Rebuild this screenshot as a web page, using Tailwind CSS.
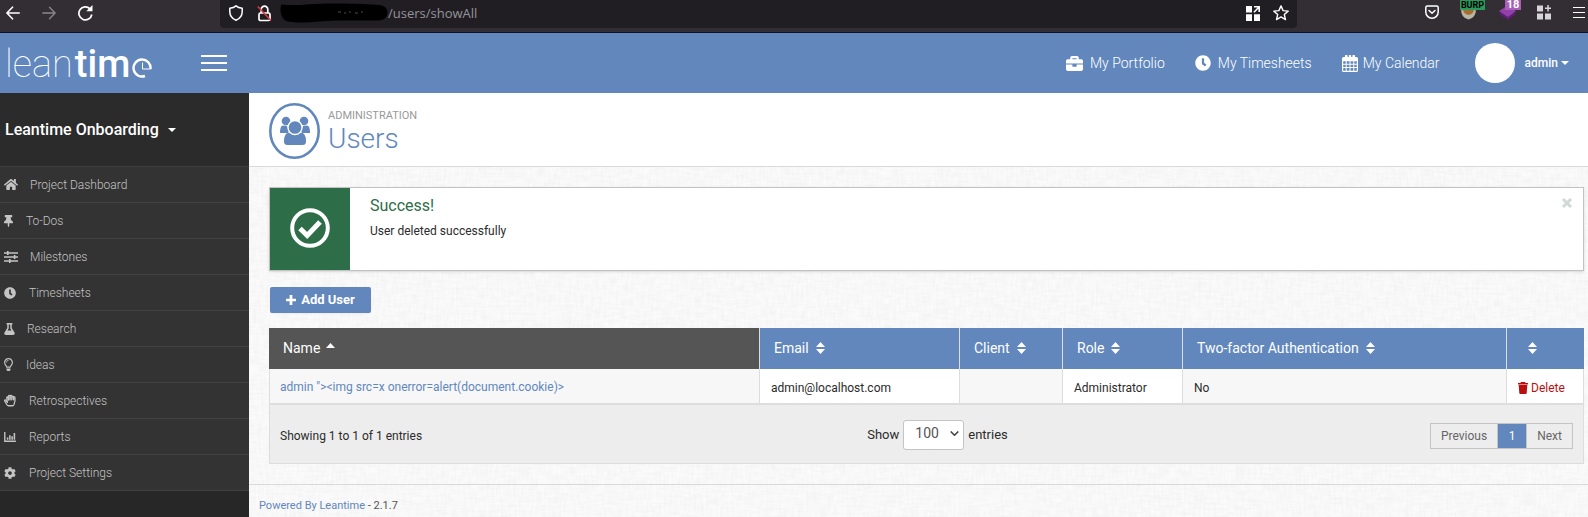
<!DOCTYPE html>
<html lang="en">
<head>
<meta charset="utf-8">
<meta name="viewport" content="width=device-width, initial-scale=1">
<title>Users - Leantime</title>
<script src="https://cdn.jsdelivr.net/npm/@tailwindcss/browser@4"></script>
</head>
<body class="min-h-screen flex flex-col font-[Roboto,sans-serif] text-xs leading-5 text-[#2b2b2b] bg-[#f7f7f7]">

<!-- Icon sprite -->
<svg class="hidden" aria-hidden="true">
  <symbol id="briefcase" viewBox="0 0 512 512"><path d="M320 336c0 8.840-7.160 16-16 16h-96c-8.840 0-16-7.160-16-16v-48H0v144c0 25.600 22.400 48 48 48h416c25.600 0 48-22.400 48-48V288H320v48zm144-208h-80V80c0-25.600-22.400-48-48-48H176c-25.600 0-48 22.400-48 48v48H48c-25.600 0-48 22.400-48 48v80h512v-80c0-25.600-22.400-48-48-48zm-144 0H192V96h128v32z"/></symbol>
  <symbol id="clock" viewBox="0 0 512 512"><path d="M256 8C119 8 8 119 8 256s111 248 248 248 248-111 248-248S393 8 256 8zm57.100 350.100L224.900 294c-3.100-2.300-4.900-5.900-4.900-9.700V116c0-6.600 5.400-12 12-12h48c6.600 0 12 5.400 12 12v137.700l63.500 46.200c5.400 3.900 6.500 11.400 2.600 16.800l-28.200 38.800c-3.900 5.300-11.400 6.500-16.800 2.600z"/></symbol>
  <symbol id="calendar" viewBox="0 0 16 17"><path fill-rule="evenodd" d="M3 1a1.300 1.300 0 0 1 2.600 0v1h1.200V1a1.200 1.200 0 0 1 2.400 0v1h1.200V1A1.300 1.300 0 0 1 13 1v1h1.500Q16 2 16 3.500v12q0 1.500-1.500 1.500h-13Q0 17 0 15.500v-12Q0 2 1.500 2H3zM1.200 6.200v2.500h2.500V6.200zm3.500 0v2.500h2.800V6.200zm3.800 0v2.500h2.800V6.200zm3.800 0v2.500h2.500V6.200zM1.200 9.700v2.400h2.500V9.700zm3.500 0v2.400h2.800V9.700zm3.800 0v2.400h2.800V9.700zm3.800 0v2.400h2.500V9.700zM1.200 13.100v2.600h2.500v-2.600zm3.500 0v2.600h2.800v-2.600zm3.800 0v2.600h2.800v-2.600zm3.800 0v2.600h2.500v-2.600z"/></symbol>
  <symbol id="home" viewBox="0 0 576 512"><path d="M280.370 148.260L96 300.110V464a16 16 0 0 0 16 16l112.060-.29a16 16 0 0 0 15.920-16V368a16 16 0 0 1 16-16h64a16 16 0 0 1 16 16v95.640a16 16 0 0 0 16 16.050L464 480a16 16 0 0 0 16-16V300L295.670 148.260a12.190 12.190 0 0 0-15.300 0zM571.600 251.470L488 182.560V44.050a12 12 0 0 0-12-12h-56a12 12 0 0 0-12 12v72.610L318.470 43a48 48 0 0 0-61 0L4.340 251.470a12 12 0 0 0-1.600 16.900l25.500 31A12 12 0 0 0 45.150 301l235.220-193.740a12.190 12.190 0 0 1 15.300 0L530.900 301a12 12 0 0 0 16.900-1.600l25.500-31a12 12 0 0 0-1.700-16.930z"/></symbol>
  <symbol id="pin" viewBox="0 0 384 512"><path d="M298.028 214.267L285.793 96H328c13.255 0 24-10.745 24-24V24c0-13.255-10.745-24-24-24H56C42.745 0 32 10.745 32 24v48c0 13.255 10.745 24 24 24h42.207L85.972 214.267C37.465 236.820 0 277.261 0 328c0 13.255 10.745 24 24 24h136v104.007c0 1.242.289 2.467.845 3.578l24 48c2.941 5.882 11.364 5.893 14.311 0l24-48a8.008 8.008 0 0 0 .845-3.578V352h136c13.255 0 24-10.745 24-24-.001-51.183-37.983-91.420-85.973-113.733z"/></symbol>
  <symbol id="sliders" viewBox="0 0 14 12"><path d="M0 1.200h14v1.500H0zM0 5.200h14v1.500H0zM0 9.200h14v1.500H0zM3 0h1.600v4H3zM9.800 4h1.600v4H9.800zM5 8h1.600v4H5z"/></symbol>
  <symbol id="flask" viewBox="0 0 448 512"><path fill-rule="evenodd" d="M437.200 403.500L320 215V64h8c13.300 0 24-10.700 24-24V24c0-13.300-10.700-24-24-24H120c-13.300 0-24 10.700-24 24v16c0 13.300 10.700 24 24 24h8v151L10.800 403.500C-18.500 450.600 15.300 512 70.900 512h306.200c55.700 0 89.400-61.500 60.100-108.500zM137.900 320l48.200-77.600c3.700-5.200 5.800-11.600 5.800-18.400V64h64v160c0 6.900 2.200 13.200 5.800 18.400l48.200 77.600h-172z"/></symbol>
  <symbol id="bulb" viewBox="0 0 352 512"><path fill-rule="evenodd" d="M176 0C78 0 0 79 0 176c0 45 17 85 44 116 17 19 43 59 52 92h160c9-33 35-73 52-92 27-31 44-71 44-116C352 79 274 0 176 0zm96 262c-19 22-35 47-47 74h-98c-12-27-28-52-47-74-21-24-32-54-32-86C48 104 105 48 176 48s128 56 128 128c0 32-11 62-32 86zM176 80c-53 0-96 43-96 96h32c0-35 29-64 64-64zM96 416h160v42l-27 40q-8 14-24 14h-58q-16 0-24-14l-27-40z"/></symbol>
  <symbol id="hand" viewBox="0 0 16 16"><path d="M4.500 10.500 2.300 7.600C1.500 6.500.3 7.500.9 8.600l3 5.100Q4.700 15 6.200 15h5.200q1.400 0 1.900-1.500l1.300-5V4.200c0-1.400-1.900-1.400-1.900 0V7M4.500 10.500 3.600 4.300C3.500 3 5.200 2.700 5.400 4l.8 3.500L5.900 2.400c0-1.400 1.900-1.500 2 0l.3 4.600.3-4.900c.1-1.300 1.900-1.200 1.900.1l-.1 4.900.6-4c.2-1.200 2-.9 1.900.4" fill="none" stroke="currentColor" stroke-width="1.700" stroke-linejoin="round" stroke-linecap="round"/></symbol>
  <symbol id="chart" viewBox="0 0 13 11"><path d="M0 0h1.500v9.300H13V11H0zM3 6h1.700v2.500H3zM5.500 3.500h1.700v5H5.500zM8 4.700h1.700v3.800H8zM10.500 1h1.700v7.500h-1.700z"/></symbol>
  <symbol id="cog" viewBox="0 0 512 512"><path d="M487.400 315.700l-42.600-24.600c4.300-23.200 4.300-47 0-70.200l42.600-24.600c4.900-2.800 7.100-8.600 5.500-14-11.100-35.600-30-67.800-54.700-94.600-3.800-4.100-10-5.100-14.800-2.300L380.800 110c-17.900-15.400-38.500-27.300-60.800-35.100V25.800c0-5.600-3.900-10.500-9.400-11.700-36.700-8.200-74.300-7.800-109.200 0-5.500 1.200-9.400 6.100-9.400 11.700V75c-22.200 7.900-42.800 19.800-60.800 35.100L88.700 85.500c-4.900-2.800-11-1.900-14.800 2.300-24.700 26.700-43.600 58.900-54.700 94.600-1.700 5.400.6 11.200 5.500 14L67.300 221c-4.300 23.200-4.300 47 0 70.200l-42.600 24.600c-4.900 2.800-7.100 8.600-5.500 14 11.100 35.600 30 67.800 54.700 94.600 3.800 4.100 10 5.100 14.800 2.300l42.600-24.600c17.900 15.400 38.500 27.300 60.800 35.100v49.200c0 5.600 3.900 10.500 9.400 11.700 36.700 8.200 74.300 7.800 109.200 0 5.500-1.200 9.400-6.100 9.400-11.700v-49.200c22.200-7.900 42.800-19.800 60.800-35.100l42.600 24.600c4.900 2.800 11 1.900 14.800-2.300 24.700-26.700 43.600-58.900 54.700-94.600 1.500-5.500-.7-11.300-5.600-14.100zM256 336c-44.100 0-80-35.900-80-80s35.900-80 80-80 80 35.900 80 80-35.900 80-80 80z"/></symbol>
  <symbol id="sort" viewBox="0 0 9 12"><path d="M0 5 4.500 0 9 5zM0 7h9l-4.500 5z"/></symbol>
  <symbol id="caret" viewBox="0 0 8 4"><path d="M0 0h8L4 4z"/></symbol>
</svg>

<!-- Browser toolbar -->
<div class="flex items-start h-[33px] shrink-0 bg-[#332e34] border-b border-[#0a1128] text-white">
  <div class="flex items-center gap-[22px] w-[220px] h-[26px] pl-[6px] shrink-0">
    <button aria-label="Back"><svg class="w-[14px] h-[14px]" viewBox="0 0 14 14" fill="none" stroke="currentColor" stroke-width="1.600" stroke-linecap="round" stroke-linejoin="round"><path d="M13.200 7H1M6.500 1.200.9 7l5.600 5.800"/></svg></button>
    <button aria-label="Forward" class="text-[#8a868b]"><svg class="w-[14px] h-[14px]" viewBox="0 0 14 14" fill="none" stroke="currentColor" stroke-width="1.300" stroke-linecap="round" stroke-linejoin="round"><path d="M.8 7H13M7.500 1.200 13.100 7l-5.600 5.800"/></svg></button>
    <button aria-label="Reload"><svg class="w-[15px] h-[16px]" viewBox="0 0 15 16" fill="none" stroke="currentColor" stroke-width="1.700"><path d="M13.800 9.500A6.500 6.500 0 1 1 12 3.800l1 1"/><path d="M14.500 0v6.300H8.300z" fill="currentColor" stroke="none"/></svg></button>
  </div>
  <div class="flex flex-1 items-center h-[28px] pb-[2px] pl-[9px] pr-2 rounded-b bg-[#201e23]">
    <svg class="w-[14px] h-[16px]" viewBox="0 0 14 16" fill="none" stroke="currentColor" stroke-width="1.500" stroke-linejoin="round"><path d="M7 .9C8.600 2.300 10.800 3 13.200 3.300v3.200c0 4.300-2.700 7.300-6.200 8.700C3.500 13.800.8 10.800.8 6.500V3.300C3.200 3 5.400 2.300 7 .9z"/></svg>
    <svg class="w-[15px] h-[17px] ml-[14px]" viewBox="0 0 15 17" fill="none" stroke="currentColor" stroke-width="1.700"><rect x="2" y="8" width="11" height="7.500" rx="1.500"/><path d="M4.200 8V4.500a3.300 3.300 0 0 1 6.600 0V8"/><path d="M.8 1.500 14 15.500" stroke="#e03848" stroke-width="1.500"/></svg>
    <svg class="w-[108px] h-[20px] ml-2" viewBox="0 0 108 20"><path d="M1 2C0 1 14 3 26 1.500 50-.5 85 .5 99 2q9 1 8.500 8Q107 17 99 17.500C75 18 60 16.500 40 18.500c-14 1-27 2-35-1Q-1 12 1 2z" fill="#000"/><path d="M58 9h3m3 1h2m3-1h2m4 1h3m3-1h2" stroke="#4a4a4a" stroke-width="1"/></svg>
    <span class="font-['Open_Sans',sans-serif] text-[13px] text-[#96939a]">/users/showAll</span>
    <svg class="w-[14px] h-[15px] ml-auto" viewBox="0 0 14 15" fill="currentColor"><path d="M0 0h6v6.500H0zM0 8.300h6V15H0zM8 8.300h6V15H8z"/><path d="M8 .8h5.200V6M13 1 8 6.300" fill="none" stroke="currentColor" stroke-width="1.600"/></svg>
    <svg class="w-[16px] h-[16px] ml-[13px]" viewBox="0 0 16 16" fill="none" stroke="currentColor" stroke-width="1.400" stroke-linejoin="round"><path d="M8 .9l2.100 4.700 5.100.5-3.900 3.400 1.200 5.100L8 11.900l-4.500 2.700 1.200-5.100L.8 6.100l5.100-.5z"/></svg>
  </div>
  <div class="flex items-start w-[291px] h-[26px] pl-[128px] shrink-0">
    <svg class="w-[14px] h-[14px] mt-[5px]" viewBox="0 0 14 14" fill="none" stroke="currentColor" stroke-width="1.500" stroke-linecap="round" stroke-linejoin="round"><path d="M.8 2.500Q.8.900 2.400.9h9.200q1.600 0 1.600 1.600V7A6.200 6.200 0 0 1 .8 7zM4 5.500l3 2.800 3-2.800"/></svg>
    <div class="relative w-[24px] h-[20px] ml-[21px]">
      <svg class="w-[18px] h-[20px]" viewBox="0 0 18 20"><path d="M1 9h15q0 9-7.500 10.500Q1 18 1 9z" fill="#b9b5a4"/><path d="M3 9h11q0 5-5.500 6Q3 14 3 9z" fill="#a5702d"/></svg>
      <span class="absolute left-0 top-0 w-[25px] h-[10px] bg-[#2a9a5c] text-center font-bold text-black text-[9px] leading-[10px]">BURP</span>
    </div>
    <div class="relative w-[22px] h-[20px] ml-[15px]">
      <svg class="w-[18px] h-[20px]" viewBox="0 0 18 20"><path d="M0 14l8-5 9 5-8 6z" fill="#5c1f73"/><path d="M0 11l8-5 9 5-8 6z" fill="#9440aa"/></svg>
      <span class="absolute right-0 top-0 w-[16px] h-[10px] bg-[#a95fba] text-center font-bold text-[11px] leading-[10px]">18</span>
    </div>
    <svg class="w-[14px] h-[15px] mt-[5px] ml-[16px]" viewBox="0 0 14 15" fill="#d8d5d9"><path d="M0 .5h6v6H0zM0 8.500h6v6H0zM8 8.500h6v6H8zM10.300 0h1.500v2.500H14V4h-2.200v2.500h-1.500V4H8V2.500h2.300z"/></svg>
    <button aria-label="Menu" class="flex flex-col gap-1 w-[12px] mt-[7px] ml-[22px]"><i class="h-px w-full bg-white"></i><i class="h-px w-full bg-white"></i><i class="h-px w-full bg-white"></i></button>
  </div>
</div>

<!-- Application header -->
<header class="flex items-center h-[60px] shrink-0 bg-[#6187bd] text-white">
  <div class="flex items-center justify-between w-[249px] h-full pl-[5px] pr-[22px] shrink-0">
    <a href="#" aria-label="Leantime" class="flex items-center gap-[2px] pt-[2px] text-[38px] leading-10"><span class="font-[100]">lean</span><span class="font-medium">tim</span><svg class="w-[20px] h-[20px] mt-2" viewBox="0 0 20 20" fill="none" stroke="currentColor"><path d="M18.500 11A8.500 8.500 0 1 0 13 18" stroke-width="2.400"/><path d="M10.500 4.500v6.500h8" stroke-width="1"/></svg></a>
    <button aria-label="Toggle menu" class="flex flex-col gap-[5px] w-[26px]"><i class="h-[2px] w-full bg-white"></i><i class="h-[2px] w-full bg-white"></i><i class="h-[2px] w-full bg-white"></i></button>
  </div>
  <nav class="flex items-center ml-auto pr-[19px] text-sm font-light">
    <a href="#" class="flex items-center gap-[7px]"><svg class="w-[17px] h-[17px]" fill="currentColor"><use href="#briefcase"/></svg>My Portfolio</a>
    <a href="#" class="flex items-center gap-[7px] ml-[30px]"><svg class="w-[16px] h-[16px]" fill="currentColor"><use href="#clock"/></svg>My Timesheets</a>
    <a href="#" class="flex items-center gap-[5px] ml-[30px]"><svg class="w-[16px] h-[17px]" fill="currentColor"><use href="#calendar"/></svg>My Calendar</a>
    <button class="flex items-center ml-[35px] text-xs font-medium"><i class="size-10 rounded-full bg-white mr-[10px]"></i>admin<svg class="w-[8px] h-[4px] ml-[3px]" fill="currentColor"><use href="#caret"/></svg></button>
  </nav>
</header>

<div class="flex flex-1">
  <!-- Sidebar -->
  <aside class="w-[249px] shrink-0 bg-[#272727] text-[#c4c4c4]">
    <button class="flex items-center w-full h-[73px] pl-[5px] bg-[#2b2b2b] text-white text-base font-medium">Leantime Onboarding<svg class="w-[8px] h-[4px] ml-[9px]" fill="currentColor"><use href="#caret"/></svg></button>
    <nav class="border-t border-[#3f3f3f] bg-[#333] font-light">
      <a href="#" class="flex items-center gap-[12px] h-9 pl-1 border-b border-[#414141]"><svg class="w-[14px] h-[13px]" fill="currentColor"><use href="#home"/></svg>Project Dashboard</a>
      <a href="#" class="flex items-center gap-[13px] h-9 pl-1 border-b border-[#414141]"><svg class="w-[9px] h-[12px]" fill="currentColor"><use href="#pin"/></svg>To-Dos</a>
      <a href="#" class="flex items-center gap-[12px] h-9 pl-1 border-b border-[#414141]"><svg class="w-[14px] h-[12px]" fill="currentColor"><use href="#sliders"/></svg>Milestones</a>
      <a href="#" class="flex items-center gap-[13px] h-9 pl-1 border-b border-[#414141]"><svg class="w-[12px] h-[12px]" fill="currentColor"><use href="#clock"/></svg>Timesheets</a>
      <a href="#" class="flex items-center gap-[12px] h-9 pl-1 border-b border-[#414141]"><svg class="w-[11px] h-[12px]" fill="currentColor"><use href="#flask"/></svg>Research</a>
      <a href="#" class="flex items-center gap-[13px] h-9 pl-1 border-b border-[#414141]"><svg class="w-[9px] h-[13px]" fill="currentColor"><use href="#bulb"/></svg>Ideas</a>
      <a href="#" class="flex items-center gap-[13px] h-9 pl-1 border-b border-[#414141]"><svg class="w-[12px] h-[13px]" fill="currentColor"><use href="#hand"/></svg>Retrospectives</a>
      <a href="#" class="flex items-center gap-[13px] h-9 pl-1 border-b border-[#414141]"><svg class="w-[12px] h-[10px]" fill="currentColor"><use href="#chart"/></svg>Reports</a>
      <a href="#" class="flex items-center gap-[13px] h-9 pl-1 border-b border-[#414141]"><svg class="w-[12px] h-[12px]" fill="currentColor"><use href="#cog"/></svg>Project Settings</a>
    </nav>
  </aside>

  <main class="relative isolate flex flex-col flex-1 min-w-0">
    <!-- Linen texture -->
    <svg class="absolute inset-0 -z-10 w-full h-full" aria-hidden="true">
      <filter id="weft" x="0" y="0" width="100%" height="100%"><feTurbulence type="fractalNoise" baseFrequency="0.07 0.4" numOctaves="2" seed="3"/><feColorMatrix values="0 0 0 0 0.4  0 0 0 0 0.4  0 0 0 0 0.4  0.12 0 0 0 -0.04"/></filter>
      <filter id="warp" x="0" y="0" width="100%" height="100%"><feTurbulence type="fractalNoise" baseFrequency="0.4 0.07" numOctaves="2" seed="8"/><feColorMatrix values="0 0 0 0 0.4  0 0 0 0 0.4  0 0 0 0 0.4  0.12 0 0 0 -0.04"/></filter>
      <rect width="100%" height="100%" fill="#fbfbfb"/>
      <rect width="100%" height="100%" filter="url(#weft)"/>
      <rect width="100%" height="100%" filter="url(#warp)"/>
    </svg>

    <div class="flex items-center gap-2 h-[74px] pt-[3px] pl-5 bg-white border-b border-[#d9d9d9]">
      <svg class="w-[51px] h-[56px] text-[#6187bd]" viewBox="0 0 51 56" fill="currentColor">
        <ellipse cx="25.500" cy="28" rx="24.200" ry="26.700" fill="none" stroke="currentColor" stroke-width="2.600"/>
        <circle cx="17" cy="18" r="4.300"/><circle cx="35" cy="18" r="4.300"/>
        <path d="M14 22.500q-3 0-3 7.500h7.500q2-1 1-3l-1.500-4zM38 22.500q3 0 3 7.500h-7.500q-2-1-1-3l1.500-4z"/>
        <path d="M20.500 29.500q-5.500 0-5.500 9 0 3.500 3.500 3.500h15q3.500 0 3.500-3.500 0-9-5.500-9z"/>
        <circle cx="26" cy="24.500" r="7" stroke="#fff" stroke-width="1.400"/>
      </svg>
      <div>
        <div class="text-[11px] leading-4 text-[#999]">ADMINISTRATION</div>
        <h1 class="text-[28px] leading-[30px] font-light text-[#6187bd]">Users</h1>
      </div>
    </div>

    <div class="pt-5 pl-5 pr-1">
      <div role="alert" class="flex h-[84px] bg-white border border-[#c2c2c2] shadow">
        <div class="flex items-center justify-center w-20 pb-[2px] bg-[#2d6d48]">
          <svg class="size-10" viewBox="0 0 40 40" fill="none" stroke="#fff"><circle cx="20" cy="20" r="17.800" stroke-width="4"/><path d="M10 20.500l7.200 7L30 14" stroke-width="5"/></svg>
        </div>
        <div class="flex-1 pl-5 pt-2">
          <h2 class="text-base leading-5 text-[#2d6d48]">Success!</h2>
          <p class="mt-[5px]">User deleted successfully</p>
        </div>
        <button aria-label="Close" class="self-start mt-[10px] mr-[11px]"><svg class="size-[10px]" viewBox="0 0 10 10" stroke="#cfdad6" stroke-width="3"><path d="M1 1l8 8M9 1 1 9"/></svg></button>
      </div>

      <button class="flex items-center justify-center gap-[5px] w-[101px] h-[26px] mt-4 ml-px rounded-[2px] bg-[#6187bd] text-white text-[13px] font-bold shadow-xs"><svg class="size-[10px]" viewBox="0 0 11 11" fill="currentColor"><path d="M4 0h3v4h4v3H7v4H4V7H0V4h4z"/></svg>Add User</button>

      <table class="table-fixed w-full mt-[15px] border-separate border-spacing-0">
        <colgroup><col class="w-[491px]"><col class="w-[200px]"><col class="w-[103px]"><col class="w-[120px]"><col class="w-[324px]"><col class="w-[77px]"></colgroup>
        <thead class="text-sm text-white">
          <tr class="h-[41px] bg-[#6187bd] text-left">
            <th scope="col" class="pl-[14px] pb-[2px] font-normal bg-[#555] border-r border-[#ddd]"><button class="flex items-center gap-[6px]">Name<svg class="w-[9px] h-[5px] mb-1" viewBox="0 0 9 5" fill="currentColor"><path d="M0 5 4.500 0 9 5z"/></svg></button></th>
            <th scope="col" class="pl-[14px] pb-[2px] font-normal border-r border-[#ddd]"><button class="flex items-center gap-[7px]">Email<svg class="w-[9px] h-[12px]" fill="currentColor"><use href="#sort"/></svg></button></th>
            <th scope="col" class="pl-[14px] pb-[2px] font-normal border-r border-[#ddd]"><button class="flex items-center gap-[7px]">Client<svg class="w-[9px] h-[12px]" fill="currentColor"><use href="#sort"/></svg></button></th>
            <th scope="col" class="pl-[14px] pb-[2px] font-normal border-r border-[#ddd]"><button class="flex items-center gap-[7px]">Role<svg class="w-[9px] h-[12px]" fill="currentColor"><use href="#sort"/></svg></button></th>
            <th scope="col" class="pl-[14px] pb-[2px] font-normal border-r border-[#ddd]"><button class="flex items-center gap-[7px]">Two-factor Authentication<svg class="w-[9px] h-[12px]" fill="currentColor"><use href="#sort"/></svg></button></th>
            <th scope="col" class="pl-[21px] pb-[2px] font-normal"><button aria-label="Sort by action" class="flex"><svg class="w-[9px] h-[12px]" fill="currentColor"><use href="#sort"/></svg></button></th>
          </tr>
        </thead>
        <tbody>
          <tr class="h-[34px]">
            <td class="pl-[10px] pt-[2px] bg-[#f7f7f7] border-x border-[#ddd]"><a href="#" class="text-[#6187bd]">admin "&gt;&lt;img src=x onerror=alert(document.cookie)&gt;</a></td>
            <td class="pl-[11px] pt-[3px] bg-white border-r border-[#ddd]">admin@localhost.com</td>
            <td class="bg-[#f7f7f7] border-r border-[#ddd]"></td>
            <td class="pl-[11px] pt-[3px] bg-white border-r border-[#ddd]">Administrator</td>
            <td class="pl-[11px] pt-[3px] bg-[#f7f7f7] border-r border-[#ddd]">No</td>
            <td class="pl-[11px] pt-[3px] bg-white border-r border-[#ddd]"><a href="#" class="flex items-center gap-[3px] text-[#b90f0f]"><svg class="w-[10px] h-[12px]" viewBox="0 0 10 12" fill="currentColor"><path d="M3 0h4l.6 1H10v1.500H0V1h2.400zM.7 3h8.600l-.6 8q-.1 1-1 1H2.300q-.9 0-1-1z"/></svg>Delete</a></td>
          </tr>
        </tbody>
      </table>

      <div class="grid grid-cols-[1fr_auto_1fr] items-center h-[61px] pt-[3px] pl-[10px] pr-[10px] bg-[#ededed] border border-t-2 border-[#ddd]">
        <div>Showing 1 to 1 of 1 entries</div>
        <div class="flex items-center gap-1 pl-[22px] pb-[2px] text-[13px]">
          <label for="page-size">Show</label>
          <div class="relative">
            <select id="page-size" class="appearance-none w-[61px] h-[30px] pl-[11px] pb-1 rounded-[3px] border border-[#c4c4c4] bg-white text-sm text-[#555]"><option>10</option><option>25</option><option>50</option><option selected>100</option></select>
            <svg class="absolute right-[5px] top-[11px] w-[9px] h-[5px] pointer-events-none" viewBox="0 0 9 5" fill="none" stroke="#444" stroke-width="1.600"><path d="M.7.500 4.500 4.200 8.300.5"/></svg>
          </div>
          <span>entries</span>
        </div>
        <div class="flex justify-self-end border border-[#c4c4c4] text-[#666]">
          <button class="h-[24px] px-[10px] border-r border-[#c4c4c4]">Previous</button>
          <button class="w-[28px] bg-[#6187bd] text-white" aria-current="page">1</button>
          <button class="px-[10px] border-l border-[#c4c4c4]">Next</button>
        </div>
      </div>
    </div>

    <footer class="mt-5 pl-[10px] pt-[11px] border-t border-[#d9d9d9] text-[11px] text-[#555]"><a href="#" class="text-[#6187bd]">Powered By Leantime</a> - 2.1.7</footer>
  </main>
</div>
</body>
</html>
